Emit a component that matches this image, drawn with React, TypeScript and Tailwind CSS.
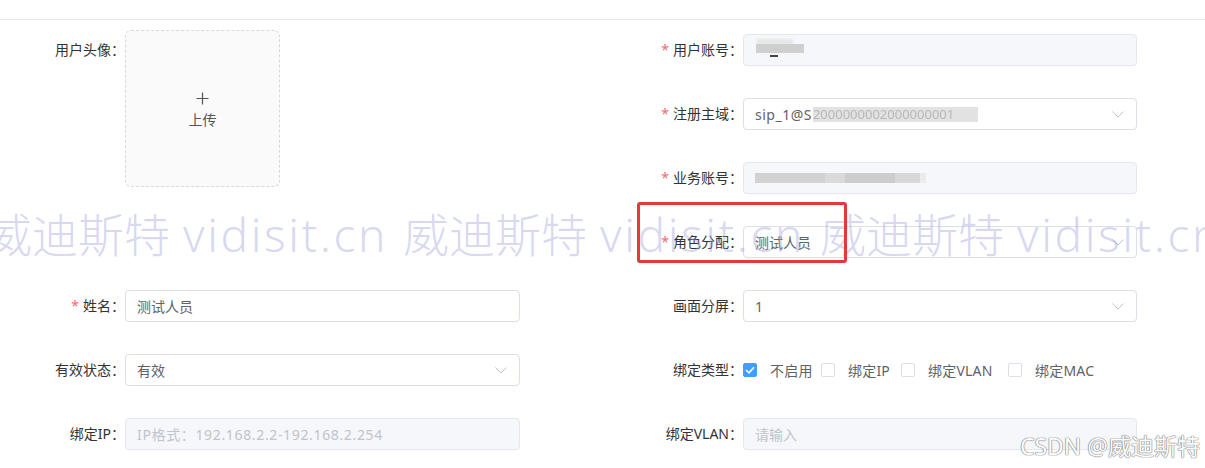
import React from "react";

const FONT = "font-['Noto_Sans','Noto_Sans_CJK_SC',sans-serif]";

function Chevron() {
  return (
    <svg width="12" height="7" viewBox="0 0 12 7" className="shrink-0">
      <polyline points="0.5,0.5 6,6 11.5,0.5" fill="none" stroke="#c0c4cc" strokeWidth="1" />
    </svg>
  );
}

function Label({ text, required }: { text: string; required?: boolean }) {
  return (
    <div className="w-[125px] shrink-0 text-right text-[14px] text-[#333] leading-[32px] whitespace-nowrap">
      {required && <span className="text-[#f56c6c] mr-[4px]">*</span>}
      {text}
    </div>
  );
}

function Box({
  disabled,
  children,
  select,
}: {
  disabled?: boolean;
  children?: React.ReactNode;
  select?: boolean;
}) {
  return (
    <div
      className={
        "flex-1 h-[32px] rounded-[4px] border flex items-center pl-[11px] pr-[12px] text-[14px] overflow-hidden " +
        (disabled ? "bg-[#f5f7fa] border-[#e4e7ed]" : "bg-white border-[#dcdfe6]")
      }
    >
      <div className="flex-1 flex items-center min-w-0 whitespace-nowrap">{children}</div>
      {select && <Chevron />}
    </div>
  );
}

function Row({
  label,
  required,
  children,
}: {
  label: string;
  required?: boolean;
  children: React.ReactNode;
}) {
  return (
    <div className="flex items-center h-[32px] mb-[32px]">
      <Label text={label} required={required} />
      {children}
    </div>
  );
}

function Check({ checked, label, w }: { checked?: boolean; label: string; w: string }) {
  return (
    <div className={"flex items-center shrink-0 " + w}>
      <div
        className={
          "w-[14px] h-[14px] rounded-[2px] border flex items-center justify-center " +
          (checked ? "bg-[#409eff] border-[#409eff]" : "bg-white border-[#dcdfe6]")
        }
      >
        {checked && (
          <svg width="10" height="8" viewBox="0 0 10 8">
            <polyline points="1,4 4,6.8 9,1.2" fill="none" stroke="#fff" strokeWidth="1.6" />
          </svg>
        )}
      </div>
      <span className="ml-[13px] text-[14px] text-[#606266] tracking-[0.2px]">{label}</span>
    </div>
  );
}

export default function App() {
  const wmSeg = (i: number) => (
    <React.Fragment key={i}>
      <span className="inline-block w-[197px] shrink-0">威迪斯特</span>
      <span className="inline-block w-[220px] shrink-0 tracking-[2.6px]">vidisit.cn</span>
    </React.Fragment>
  );
  return (
    <div className={"relative w-[1205px] h-[468px] bg-white overflow-hidden " + FONT}>
      <div className="h-[20px] border-b border-[#e8e8e8]" />
      <div className="flex gap-[98px]">
        {/* left column */}
        <div className="w-[520px] pt-[10px] flex flex-col">
          <div className="flex items-start mb-[103px]">
            <div className="mt-[4px]">
              <Label text="用户头像：" />
            </div>
            <div className="w-[155px] h-[157px] pt-[5px] rounded-[6px] border border-dashed border-[#d9d9d9] bg-[#fafafa] flex flex-col items-center justify-center">
              <svg width="13" height="13" viewBox="0 0 13 13">
                <path d="M6.5 0.5v12M0.5 6.5h12" stroke="#555" strokeWidth="1.2" />
              </svg>
              <span className="mt-[5px] text-[14px] text-[#555] leading-[20px]">上传</span>
            </div>
          </div>
          <Row label="姓名：" required>
            <Box>
              <span className="text-[#606266]">测试人员</span>
            </Box>
          </Row>
          <Row label="有效状态：">
            <Box select>
              <span className="text-[#606266]">有效</span>
            </Box>
          </Row>
          <Row label="绑定IP：">
            <Box disabled>
              <span className="text-[#c0c4cc] tracking-[0.65px]">IP格式：192.168.2.2-192.168.2.254</span>
            </Box>
          </Row>
        </div>
        {/* right column */}
        <div className="w-[519px] pt-[14px] flex flex-col">
          <Row label="用户账号：" required>
            <Box disabled>
              <div className="relative w-[50px] h-[22px]">
                <div className="absolute left-[2px] top-[0px] w-[36px] h-[6px] bg-[#e6e6e6] blur-[1px]" />
                <div className="absolute left-[1px] top-[5px] w-[48px] h-[9px] bg-[#cfcfcf] blur-[0.6px]" />
                <div className="absolute left-[15px] top-[16px] w-[8px] h-[1.5px] bg-[#444]" />
              </div>
            </Box>
          </Row>
          <Row label="注册主域：" required>
            <Box select>
              <span className="text-[#606266] tracking-[0.5px]">sip_1@S</span>
              <span className="ml-[1px] h-[15px] w-[165px] bg-[#e2e2e2] text-[#b8b8b8] text-[13px] leading-[15px] overflow-hidden blur-[0.5px]">
                2000000002000000001
              </span>
            </Box>
          </Row>
          <Row label="业务账号：" required>
            <Box disabled>
              <div className="flex items-center h-[14px] blur-[0.7px]">
                <div className="w-[70px] h-[10px] bg-[#d2d2d2]" />
                <div className="w-[20px] h-[10px] bg-[#dadada]" />
                <div className="w-[50px] h-[10px] bg-[#cdcdcd]" />
                <div className="w-[25px] h-[10px] bg-[#d8d8d8]" />
                <div className="w-[6px] h-[10px] bg-[#ececec]" />
              </div>
            </Box>
          </Row>
          <Row label="角色分配：" required>
            <Box select>
              <span className="text-[#606266]">测试人员</span>
            </Box>
          </Row>
          <Row label="画面分屏：">
            <Box select>
              <span className="text-[#606266]">1</span>
            </Box>
          </Row>
          <Row label="绑定类型：">
            <div className="flex items-center">
              <Check checked label="不启用" w="w-[78px]" />
              <Check label="绑定IP" w="w-[80px]" />
              <Check label="绑定VLAN" w="w-[107px]" />
              <Check label="绑定MAC" w="w-[100px]" />
            </div>
          </Row>
          <Row label="绑定VLAN：">
            <Box disabled>
              <span className="text-[#c0c4cc]">请输入</span>
            </Box>
          </Row>
        </div>
      </div>

      {/* big watermark overlay */}
      <div className="absolute left-[-14px] top-[206px] flex whitespace-nowrap text-[46px] leading-[56px] font-light text-[rgba(160,160,222,0.42)] pointer-events-none">
        {[0, 1, 2].map(wmSeg)}
      </div>

      {/* red highlight box */}
      <div className="absolute left-[637px] top-[202px] w-[210px] h-[61px] border-[3px] border-[#e0393e] rounded-[3px] pointer-events-none" />

      {/* CSDN watermark */}
      <div className="absolute right-[5px] top-[431px] text-[23px] leading-[30px] text-white whitespace-nowrap [text-shadow:0_0_1px_#777,0_0_1px_#777,0_0_1px_#777] pointer-events-none">
        CSDN @威迪斯特
      </div>
    </div>
  );
}
